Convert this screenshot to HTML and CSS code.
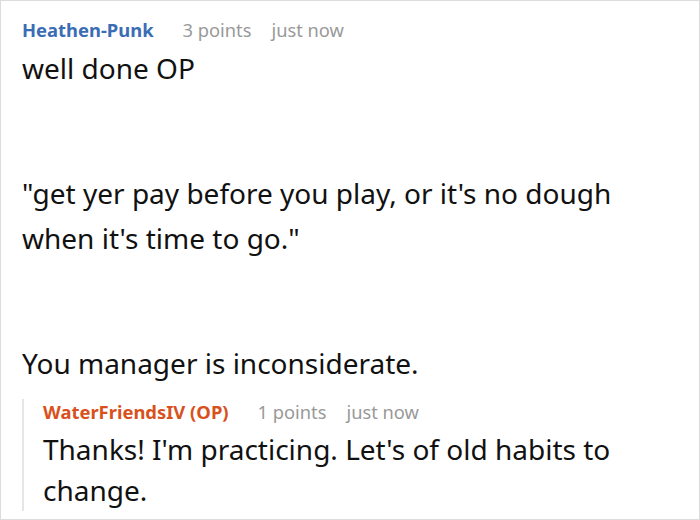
FILE: index.html
```html
<!DOCTYPE html>
<html>
<head>
<meta charset="utf-8">
<link rel="stylesheet" href="styles.css">
</head>
<body>
<div class="page">
  <div class="comment">
    <div class="meta">
      <span class="user">Heathen-Punk</span>
      <span class="points">3 points</span>
      <span class="time">just now</span>
    </div>
    <div class="body">
      <p>well done OP</p>
      <p>"get yer pay before you play, or it's no dough when it's time to go."</p>
      <p>You manager is inconsiderate.</p>
    </div>
    <div class="reply">
      <div class="meta">
        <span class="user op">WaterFriendsIV (OP)</span>
        <span class="points">1 points</span>
        <span class="time">just now</span>
      </div>
      <div class="body">
        <p>Thanks! I'm practicing. Let's of old habits to change.</p>
      </div>
    </div>
  </div>
</div>
</body>
</html>
```

FILE: styles.css
```css
html, body {
  margin: 0;
  padding: 0;
  background: #fff;
}
.page {
  width: 700px;
  height: 520px;
  box-sizing: border-box;
  border: 1px solid #dcdcdc;
  overflow: hidden;
  font-family: "Noto Sans", "Open Sans", sans-serif;
  color: #111;
}
.comment {
  padding: 16px 50px 0 21px;
}
.meta {
  display: flex;
  align-items: baseline;
  font-size: 18.3px;
  line-height: 26px;
  color: #999;
}
.user {
  font-weight: bold;
  font-size: 18.4px;
  color: #3b6db5;
  margin-right: 29px;
}
.user.op {
  color: #d8511d;
}
.points {
  margin-right: 20px;
}
.body {
  margin-top: 3px;
  font-size: 28px;
  line-height: 45px;
}
.body p {
  margin: 0 0 80px 0;
}
.body p:last-child {
  margin-bottom: 0;
}
.reply {
  margin-top: 13px;
  border-left: 2px solid #e6e6e6;
  padding-left: 19px;
  padding-bottom: 0;
}
.reply .body {
  margin-top: 4px;
  line-height: 41px;
}
```
